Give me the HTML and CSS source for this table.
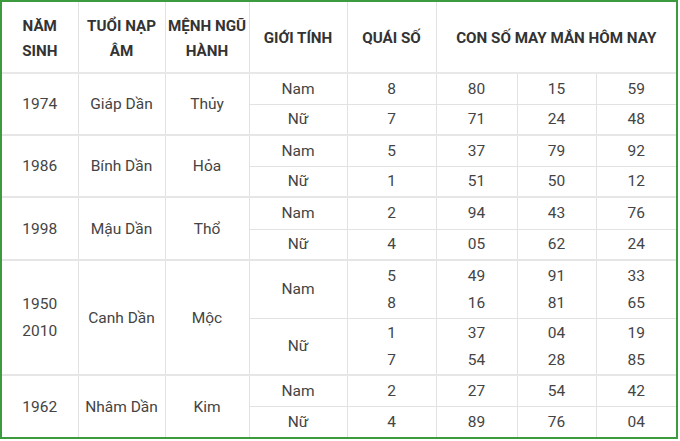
FILE: index.html
```html
<!DOCTYPE html>
<html>
<head>
<meta charset="utf-8">
<link rel="stylesheet" href="styles.css">
</head>
<body>
<div class="frame">
<table class="tbl">
<colgroup>
<col class="c1"><col class="c2"><col class="c3"><col class="c4"><col class="c5"><col class="c6"><col class="c7"><col class="c8">
</colgroup>
<thead>
<tr class="hd">
<th>NĂM<br>SINH</th><th>TUỔI NẠP<br>ÂM</th><th>MỆNH NGŨ<br>HÀNH</th><th>GIỚI TÍNH</th><th>QUÁI SỐ</th><th colspan="3">CON SỐ MAY MẮN HÔM NAY</th>
</tr>
</thead>
<tbody>
<tr class="r"><td rowspan="2" class="g">1974</td><td rowspan="2" class="g">Giáp Dần</td><td rowspan="2" class="g">Thủy</td><td>Nam</td><td>8</td><td>80</td><td>15</td><td>59</td></tr>
<tr class="r g"><td>Nữ</td><td>7</td><td>71</td><td>24</td><td>48</td></tr>
<tr class="r"><td rowspan="2" class="g">1986</td><td rowspan="2" class="g">Bính Dần</td><td rowspan="2" class="g">Hỏa</td><td>Nam</td><td>5</td><td>37</td><td>79</td><td>92</td></tr>
<tr class="r g"><td>Nữ</td><td>1</td><td>51</td><td>50</td><td>12</td></tr>
<tr class="r2"><td rowspan="2" class="g">1998</td><td rowspan="2" class="g">Mậu Dần</td><td rowspan="2" class="g">Thổ</td><td>Nam</td><td>2</td><td>94</td><td>43</td><td>76</td></tr>
<tr class="r g"><td>Nữ</td><td>4</td><td>05</td><td>62</td><td>24</td></tr>
<tr class="d1"><td rowspan="2" class="g">1950<br>2010</td><td rowspan="2" class="g">Canh Dần</td><td rowspan="2" class="g">Mộc</td><td>Nam</td><td>5<br>8</td><td>49<br>16</td><td>91<br>81</td><td>33<br>65</td></tr>
<tr class="d2 g"><td>Nữ</td><td>1<br>7</td><td>37<br>54</td><td>04<br>28</td><td>19<br>85</td></tr>
<tr class="r"><td rowspan="2" class="g last">1962</td><td rowspan="2" class="g last">Nhâm Dần</td><td rowspan="2" class="g last">Kim</td><td>Nam</td><td>2</td><td>27</td><td>54</td><td>42</td></tr>
<tr class="r last"><td>Nữ</td><td>4</td><td>89</td><td>76</td><td>04</td></tr>
</tbody>
</table>
</div>
</body>
</html>
```
FILE: styles.css
```css
html, body {
  margin: 0;
  padding: 0;
  background: #ffffff;
}
.frame {
  width: 674px;
  height: 435px;
  border: 2px solid #3d9b3f;
  overflow: hidden;
  font-family: Roboto, "Liberation Sans", sans-serif;
}
.tbl {
  width: 674px;
  border-collapse: collapse;
  table-layout: fixed;
}
.c1 { width: 76px; }
.c2 { width: 87px; }
.c3 { width: 84px; }
.c4 { width: 98px; }
.c5 { width: 89px; }
.c6 { width: 81px; }
.c7 { width: 79px; }
.c8 { width: 80px; }
.tbl th, .tbl td {
  border: 1px solid #e2e2e2;
  text-align: center;
  vertical-align: middle;
  padding: 0;
  color: #3a3a3a;
}
.tbl th:first-child, .tbl td:first-child { border-left: none; }
.tbl th:last-child, .tbl td:last-child { border-right: none; }
.tbl thead th { border-top: none; }
.hd { height: 71px; }
.hd th {
  font-size: 15.2px;
  font-weight: 700;
  line-height: 25px;
  padding-top: 3px;
  color: #333333;
  border-bottom: 2px solid #e8e8e8;
}
.tbl td {
  font-size: 15.5px;
  line-height: 27px;
  padding-top: 1px;
  color: #444444;
}
.r { height: 31px; }
.r2 { height: 32px; }
.d1 { height: 58px; }
.d2 { height: 57px; }
.g td, td.g { border-bottom: 2px solid #e6e6e6; }
.last td, td.last { border-bottom: none; }
```
